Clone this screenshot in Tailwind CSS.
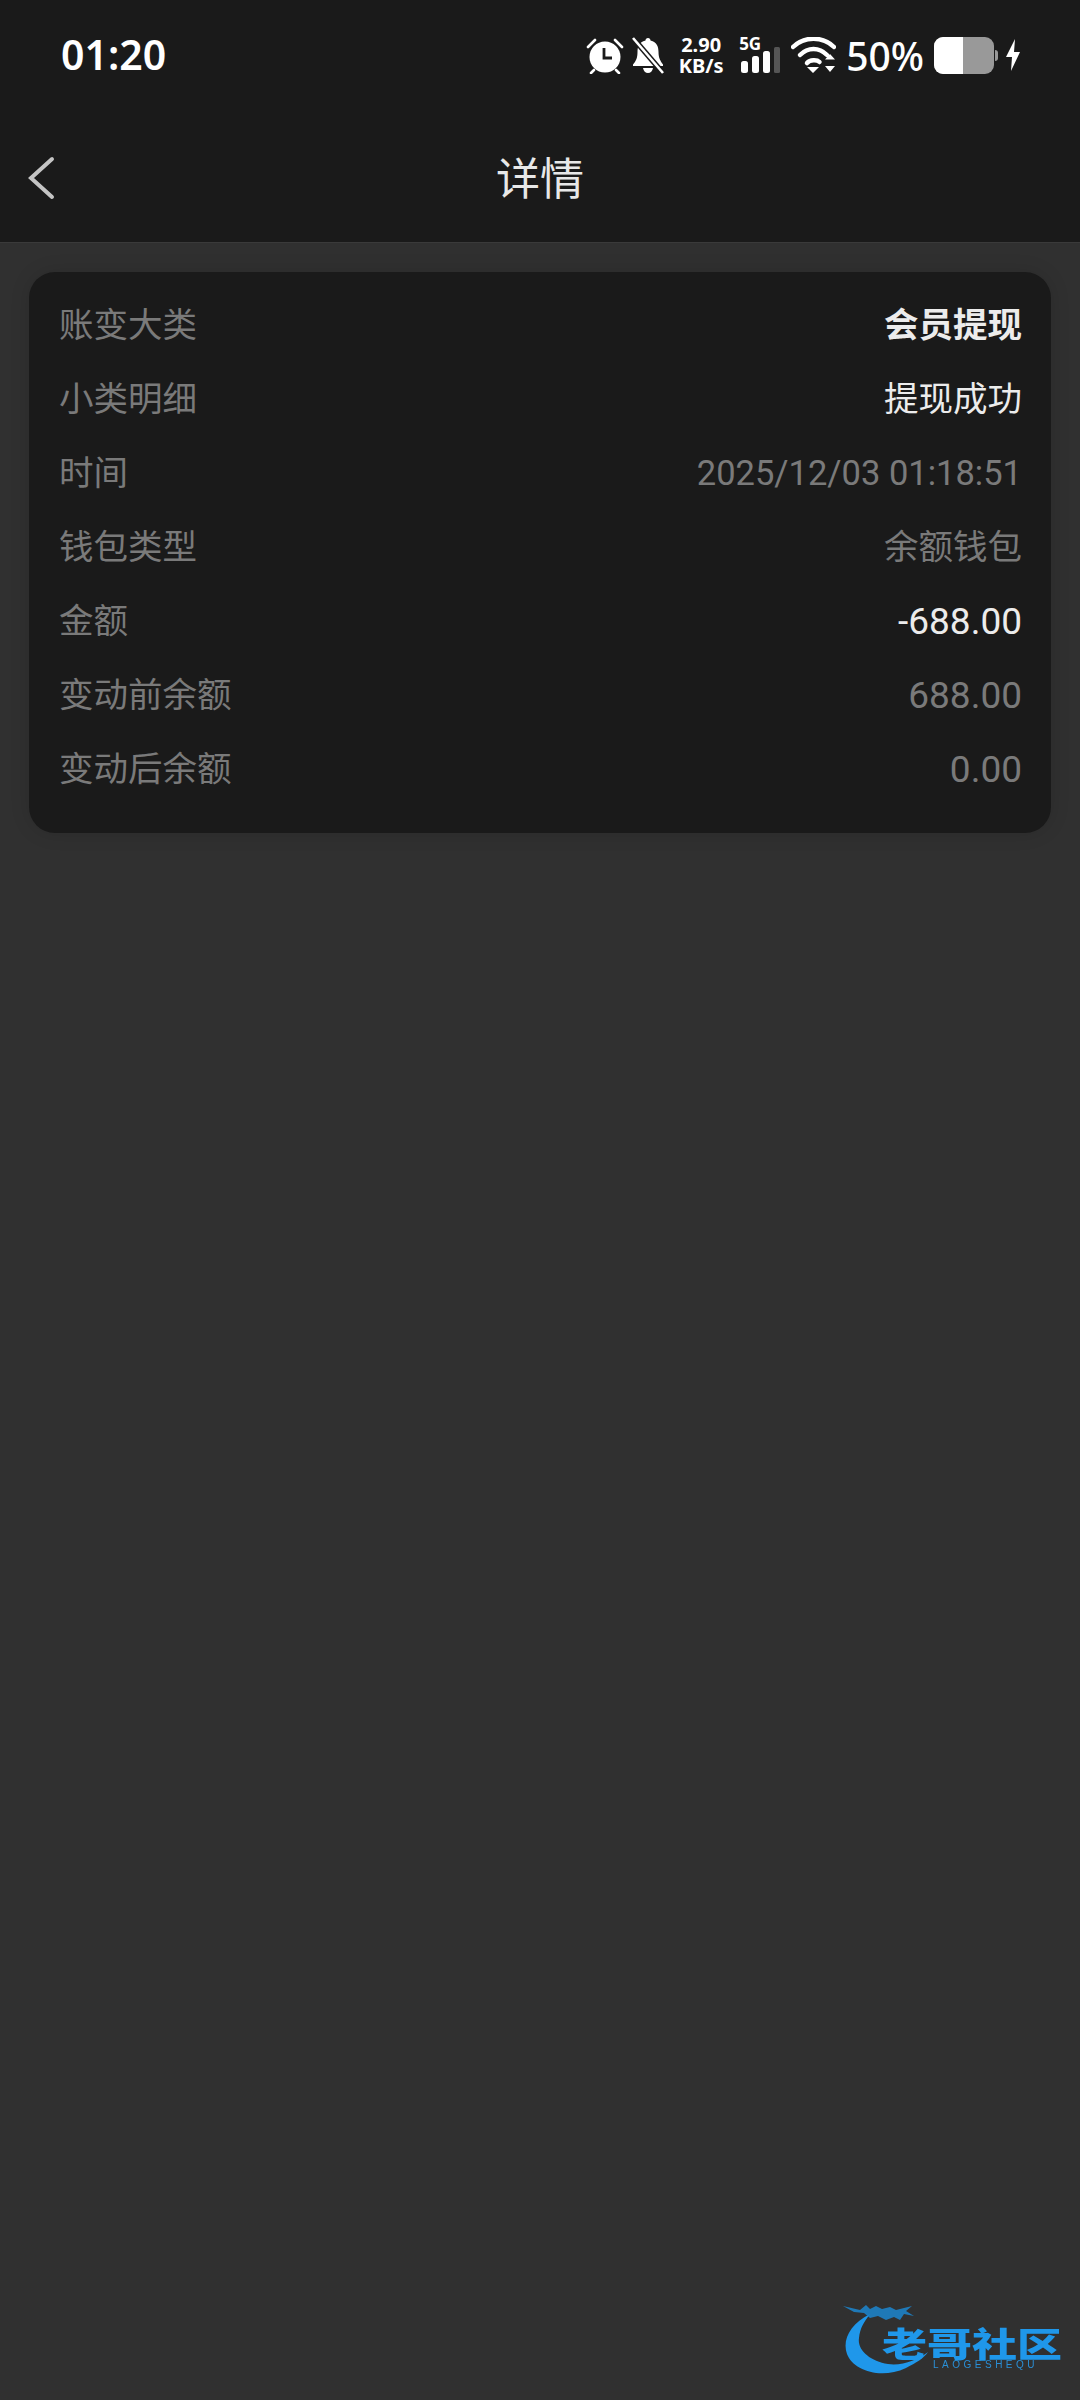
<!DOCTYPE html>
<html lang="zh-CN">
<head>
    <meta charset="UTF-8">
    <meta name="viewport" content="width=device-width, initial-scale=1.0">
    <title>详情</title>
    <script src="https://cdn.jsdelivr.net/npm/@tailwindcss/browser@4"></script>
</head>
<body class="bg-[#303030] font-['Roboto','Noto_Sans_CJK_SC',sans-serif]">
    <div class="relative w-[1080px] h-[2400px] overflow-hidden">
        <!-- Status bar -->
        <div class="flex items-center h-[110px] bg-[#1a1a1a] pl-[61px] text-white">
            <span class="pb-[2px] text-[41px] font-semibold font-['Noto_Sans',sans-serif] leading-none">01:20</span>
            <div class="ml-auto flex items-center h-full">
                <!-- alarm -->
                <svg width="38" height="37" viewBox="0 0 38 37">
                    <path d="M2 10 9 3M36 10 29 3M8 33 5 36M30 33 33 36" stroke="#fff" stroke-width="2.6" stroke-linecap="round" fill="none"/>
                    <circle cx="19" cy="20" r="15.5" fill="#fff"/>
                    <path d="M18 11v10h8" stroke="#1a1a1a" stroke-width="2.8" fill="none"/>
                </svg>
                <!-- muted bell -->
                <svg class="ml-[8px]" width="32" height="37" viewBox="0 0 32 37">
                    <path d="M16 1c1.500 0 2.500 1 2.500 2.500C25 5 26.500 10 26.500 15c0 6 2 9 4.500 12.500V29H1v-1.500C4 24 5.500 21 5.500 15c0-5 1.500-10 8-11.500C13.500 2 14.500 1 16 1zM11 31h10c-.5 3-2.500 5-5 5s-4.500-2-5-5z" fill="#fff"/>
                    <path d="M1 1 31 36" stroke="#1a1a1a" stroke-width="5.500"/>
                    <path d="M1 1 31 36" stroke="#fff" stroke-width="2.600"/>
                </svg>
                <!-- network speed -->
                <div class="ml-[14px] w-[46px] flex flex-col items-center font-['Noto_Sans',sans-serif] font-bold text-[20px] leading-[21px]">
                    <span>2.90</span>
                    <span>KB/s</span>
                </div>
                <!-- 5G signal -->
                <div class="ml-[15px] relative w-[42px] h-[36px]">
                    <span class="absolute left-0 -top-[1px] font-['Noto_Sans',sans-serif] font-bold text-[17px] leading-[16px]">5G</span>
                    <svg class="absolute left-0 top-0" width="42" height="36" viewBox="0 0 42 36">
                        <rect x="2" y="24" width="7" height="12" rx="2.500" fill="#fff"/>
                        <rect x="13" y="19" width="7" height="17" rx="2.500" fill="#fff"/>
                        <rect x="24" y="14" width="7" height="22" rx="2.500" fill="#fff"/>
                        <rect x="35" y="10" width="6" height="26" rx="1.500" fill="#555"/>
                    </svg>
                </div>
                <!-- wifi -->
                <svg class="ml-[10px]" width="45" height="36" viewBox="0 0 45 36">
                    <path d="M2 10C13-1 32-1 43 10" stroke="#fff" stroke-width="4.500" fill="none" stroke-linecap="round"/>
                    <path d="M9 18C17 10 28 10 36 18" stroke="#fff" stroke-width="4.500" fill="none" stroke-linecap="round"/>
                    <path d="M16 26C19 22.500 26 22.500 28.500 25" stroke="#fff" stroke-width="4.500" fill="none" stroke-linecap="round"/>
                    <path d="M16 30H28L22 36zM34 22.500 39 17 44 22.500zM34 29H44L39 35z" fill="#fff"/>
                </svg>
                <span class="ml-[10px] text-[39px] font-medium font-['Noto_Sans',sans-serif] leading-none">50%</span>
                <!-- battery -->
                <svg class="ml-[10px]" width="64" height="37" viewBox="0 0 64 37">
                    <rect x="0" y="0" width="60" height="37" rx="9" fill="#999"/>
                    <path d="M9 0H29V37H9A9 9 0 0 1 0 28V9A9 9 0 0 1 9 0z" fill="#fff"/>
                    <path d="M61 13c2 0 3 1 3 3v5c0 2-1 3-3 3z" fill="#999"/>
                </svg>
                <!-- charging bolt -->
                <svg class="ml-[8px] mr-[60px]" width="14" height="32" viewBox="0 0 14 32">
                    <path d="M9 0 0 18H6L5 32 14 13H8z" fill="#fff"/>
                </svg>
            </div>
        </div>

        <!-- Title bar -->
        <header class="relative flex items-center justify-center h-[133px] bg-[#1a1a1a] border-b border-[#3a3a3a]">
            <svg class="absolute left-[27px] top-[46px]" width="28" height="44" viewBox="0 0 28 44">
                <path d="M25 3 4 22 25 41" stroke="#c4c4c4" stroke-width="4" fill="none" stroke-linecap="round"/>
            </svg>
            <h1 class="pt-[8px] text-[44px] text-[#e8e8e8] leading-none">详情</h1>
        </header>

        <!-- Transaction details -->
        <main class="pt-[29px] px-[29px]">
            <section class="h-[561px] bg-[#1a1a1a] rounded-[26px] pl-[30px] pr-[29px] pt-[17px] text-[34.5px] text-[#7a7a7a] shadow-[0_0_20px_rgba(0,0,0,0.12)]">
                <div class="flex items-center justify-between h-[74px]">
                    <span>账变大类</span>
                    <span class="font-bold text-[#ececec]">会员提现</span>
                </div>
                <div class="flex items-center justify-between h-[74px]">
                    <span>小类明细</span>
                    <span class="text-[#ececec]">提现成功</span>
                </div>
                <div class="flex items-center justify-between h-[74px]">
                    <span>时间</span>
                    <span>2025/12/03 01:18:51</span>
                </div>
                <div class="flex items-center justify-between h-[74px]">
                    <span>钱包类型</span>
                    <span>余额钱包</span>
                </div>
                <div class="flex items-center justify-between h-[74px]">
                    <span>金额</span>
                    <span class="text-[37px] text-[#ececec]">-688.00</span>
                </div>
                <div class="flex items-center justify-between h-[74px]">
                    <span>变动前余额</span>
                    <span class="text-[37px]">688.00</span>
                </div>
                <div class="flex items-center justify-between h-[74px]">
                    <span>变动后余额</span>
                    <span class="text-[37px]">0.00</span>
                </div>
            </section>
        </main>

        <!-- Community logo -->
        <div class="absolute left-[840px] top-[2300px] w-[230px] h-[80px] blur-[0.6px]">
            <svg class="absolute left-0 top-0" width="110" height="78" viewBox="0 0 110 78">
                <path d="M30 14C10 24 2 40 7 54 13 70 40 80 66 68 76 63 84 58 88 52 78 60 62 66 48 64 30 61 17 50 19 38 20 28 24 22 30 14z" fill="#1f97ea"/>
                <path d="M3 6 20 10 26 5 30 9 36 6 42 9 50 7 56 10 72 6 66 11 74 16 64 14 60 20 54 17 46 20 38 16 30 18 24 13 14 12z" fill="#1c86cf" opacity="0.85"/>
            </svg>
            <span class="absolute left-[42px] top-[26px] text-[45px] leading-[34px] font-black whitespace-nowrap scale-y-75 text-[#1f97ea] font-['Noto_Sans_CJK_SC',sans-serif]">老哥社区</span>
            <span class="absolute left-[93px] top-[60px] text-[10px] leading-[10px] tracking-[3.500px] text-[#2a8fd6] font-['Liberation_Sans',sans-serif]">LAOGESHEQU</span>
        </div>
    </div>
</body>
</html>
